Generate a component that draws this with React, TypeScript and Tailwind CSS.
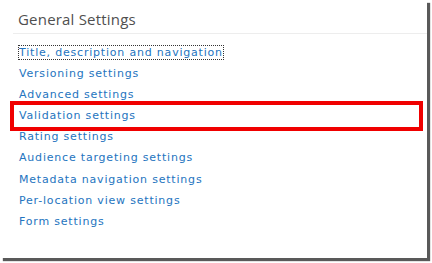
import React from "react";

const links = [
  "Title, description and navigation",
  "Versioning settings",
  "Advanced settings",
  "Validation settings",
  "Rating settings",
  "Audience targeting settings",
  "Metadata navigation settings",
  "Per-location view settings",
  "Form settings",
];

export default function App() {
  return (
    <div className="w-[432px] h-[263px] bg-white overflow-hidden">
      <div className="w-[427px] h-[258px] bg-white shadow-[3px_3px_1px_rgba(0,0,0,0.65)] pt-[9px]">
        <div
          className="pl-[18px] text-[15px] leading-[20px] tracking-[0.2px] text-[#4f4f4f]"
          style={{ fontFamily: "'Open Sans', 'Noto Sans', sans-serif" }}
        >
          General Settings
        </div>
        <div className="ml-[13px] mt-[4px] h-px bg-[#ededed]" />
        <div
          className="mt-[8px] text-[11px] leading-[21.1px] tracking-[0.8px] text-[#2474c0]"
          style={{ fontFamily: "'DejaVu Sans', Verdana, sans-serif" }}
        >
          {links.map((l, i) => (
            <div key={l} className="relative pl-[19px] h-[21.1px]">
              <span
                className={
                  i === 0
                    ? "outline-1 outline-dotted outline-[#333] outline-offset-0"
                    : ""
                }
              >
                {l}
              </span>
              {l === "Validation settings" && (
                <div className="absolute left-[10px] w-[413px] top-[-4px] h-[30px] border-[4px] border-[#f00000]" />
              )}
            </div>
          ))}
        </div>
      </div>
    </div>
  );
}
